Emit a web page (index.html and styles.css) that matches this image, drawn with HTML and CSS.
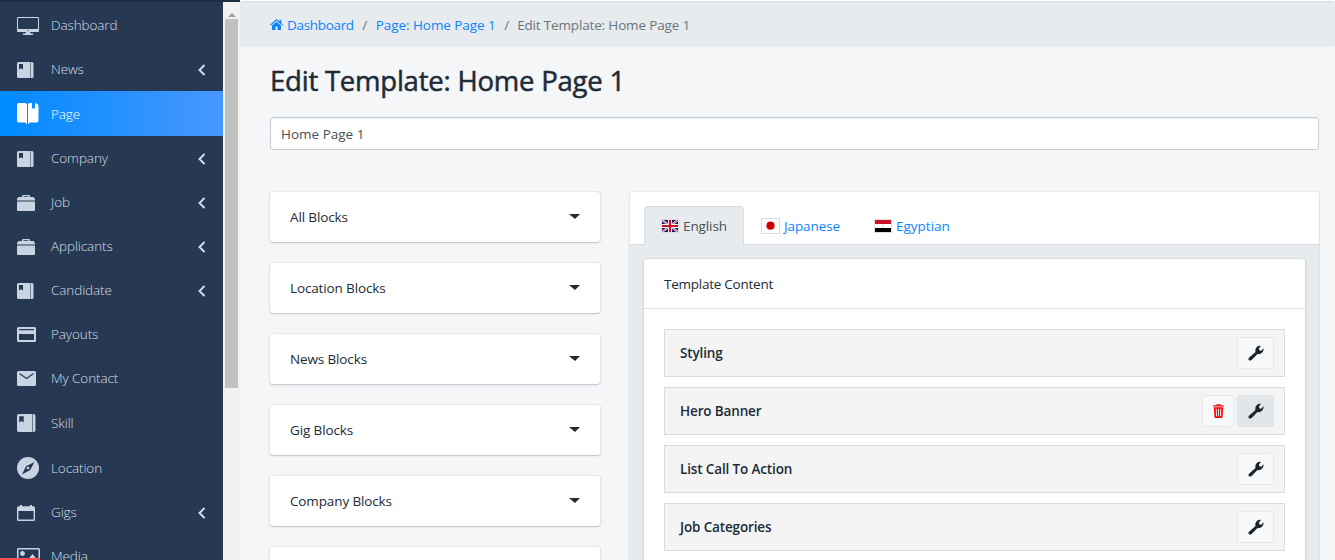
FILE: index.html
```html
<!DOCTYPE html>
<html lang="en">
<head>
<meta charset="utf-8">
<title>Edit Template: Home Page 1</title>
<link rel="stylesheet" href="styles.css">
</head>
<body>
<svg class="sprite" aria-hidden="true">
  <symbol id="i-desktop" viewBox="0 0 22 18"><path fill-rule="evenodd" d="M1 0h20q1 0 1 1v13q0 1-1 1H1q-1 0-1-1V1q0-1 1-1zM1 1v11h20V1zM10.500 13v1h1v-1zM9 15h4l.5 1.500H16V18H6v-1.500h2.500z"/></symbol>
  <symbol id="i-album" viewBox="0 0 17 16"><path fill-rule="evenodd" d="M1.500 0H13.500v16H1.500Q0 16 0 14.500v-13Q0 0 1.500 0zM2 2V7.500l2-1.200L6 7.500V2z"/><path d="M14 0h1q1.500 0 1.500 1.500v13Q16.500 16 15 16h-1z"/></symbol>
  <symbol id="i-book" viewBox="0 0 22 22"><path d="M2 0h6q2 .2 2 1.500v20L8.500 19.500H2q-2 0-2-2V2Q0 0 2 0zM13 0H15v6l1.500-1.200L18 6V.2L19.500.5Q21.500 1 21.500 3v14.500q0 2-2 2h-7l-1.500 2V1.500Q11 .2 13 0z"/></symbol>
  <symbol id="i-case" viewBox="0 0 18 16"><path fill-rule="evenodd" d="M5 2V1q0-1 1-1h6q1 0 1 1v1h3.500L18 4v1.500H0V4l1.500-2zm1.500 0h5V1.200h-5zM0 6.500h18V15q0 1-1 1H1q-1 0-1-1z"/></symbol>
  <symbol id="i-card" viewBox="0 0 19 15"><path fill-rule="evenodd" d="M1.500 0h16Q19 0 19 1.500v12q0 1.500-1.500 1.500h-16Q0 15 0 13.500v-12Q0 0 1.500 0zM2 2v1.200h15V2zm0 5v6h15V7z"/></symbol>
  <symbol id="i-mail" viewBox="0 0 19 15"><rect width="19" height="15" rx="1.500"/><path class="cut" d="M2.500 2.500l7 5 7-5"/></symbol>
  <symbol id="i-compass" viewBox="0 0 22 22"><path fill-rule="evenodd" d="M11 0a11 11 0 100 22 11 11 0 000-22zm6.500 5l-4.300 8L5 17.500l4-8.300z"/><circle cx="11" cy="11" r="1.300"/></symbol>
  <symbol id="i-calendar" viewBox="0 0 18 16"><path fill-rule="evenodd" d="M3 0h2v1.200h8V0h2v1.200h1.500Q18 1.200 18 2.700v11.800q0 1.500-1.500 1.500h-15Q0 16 0 14.500V2.700q0-1.500 1.500-1.500H3zM1.400 6v8.600h15.200V6z"/></symbol>
  <symbol id="i-image" viewBox="0 0 23 18"><path fill-rule="evenodd" d="M1.500 0h20Q23 0 23 1.500v15q0 1.500-1.500 1.500h-20Q0 18 0 16.500v-15Q0 0 1.500 0zm0 1.500v15h20v-15z"/><circle cx="5.500" cy="5.500" r="2.400"/><path d="M3 15l4-5 3 3 5.500-7 5 6v3z"/></symbol>
  <symbol id="i-chev" viewBox="0 0 8 12"><path class="line" d="M6.500 1L1.500 6l5 5"/></symbol>
  <symbol id="i-home" viewBox="0 0 13 11"><path d="M6.500 0L9.500 2.600V.8h1.700v3.300L13 5.700l-.8.800-5.700-4.900L.8 6.500 0 5.700z"/><path d="M2 6.600l4.500-3.900L11 6.600V11H7.600V7.500H5.400V11H2z"/></symbol>
  <symbol id="i-wrench" viewBox="0 0 16 16"><path d="M1 12.700L7.500 7Q6.800 4.200 8.600 2.300T13 1l-2 2.300.3 2 2 .4L15.500 3.300Q16 6 14 7.800T9.500 9L3.300 15.200Q2 16 .9 15T1 12.700z"/></symbol>
  <symbol id="i-trash" viewBox="0 0 11 14"><path fill-rule="evenodd" d="M3.300 1.200Q3.400 0 4.500 0h2q1.100 0 1.200 1.200H10q1 0 1 1.300H0q0-1.300 1-1.300zm1 0h2.400Q6.600.8 6.200.8H4.800Q4.400.8 4.300 1.200zM.8 3.200h9.400L9.500 13q-.1 1-1 1h-6q-.9 0-1-1zM2.700 4.800l.4 7.500h.9l-.3-7.500zm2.400 0v7.500h.8V4.800zm2.200 0L7 12.300h.9l.4-7.500z"/></symbol>
</svg>

<div class="app">
  <nav class="sidebar">
    <a class="item"><span class="ico"><svg width="22" height="18"><use href="#i-desktop"/></svg></span><span class="label">Dashboard</span></a>
    <a class="item"><span class="ico"><svg width="17" height="16"><use href="#i-album"/></svg></span><span class="label">News</span><svg class="chev"><use href="#i-chev"/></svg></a>
    <a class="item tall active"><span class="ico"><svg width="22" height="22"><use href="#i-book"/></svg></span><span class="label">Page</span></a>
    <a class="item"><span class="ico"><svg width="17" height="16"><use href="#i-album"/></svg></span><span class="label">Company</span><svg class="chev"><use href="#i-chev"/></svg></a>
    <a class="item"><span class="ico"><svg width="18" height="16"><use href="#i-case"/></svg></span><span class="label">Job</span><svg class="chev"><use href="#i-chev"/></svg></a>
    <a class="item"><span class="ico"><svg width="18" height="16"><use href="#i-case"/></svg></span><span class="label">Applicants</span><svg class="chev"><use href="#i-chev"/></svg></a>
    <a class="item"><span class="ico"><svg width="17" height="16"><use href="#i-album"/></svg></span><span class="label">Candidate</span><svg class="chev"><use href="#i-chev"/></svg></a>
    <a class="item"><span class="ico"><svg width="19" height="15"><use href="#i-card"/></svg></span><span class="label">Payouts</span></a>
    <a class="item"><span class="ico"><svg width="19" height="15"><use href="#i-mail"/></svg></span><span class="label">My Contact</span></a>
    <a class="item tall"><span class="ico"><svg width="19" height="18"><use href="#i-album"/></svg></span><span class="label">Skill</span></a>
    <a class="item tall"><span class="ico"><svg width="22" height="22"><use href="#i-compass"/></svg></span><span class="label">Location</span></a>
    <a class="item"><span class="ico"><svg width="18" height="16"><use href="#i-calendar"/></svg></span><span class="label">Gigs</span><svg class="chev"><use href="#i-chev"/></svg></a>
    <a class="item"><span class="ico"><svg width="23" height="18"><use href="#i-image"/></svg></span><span class="label">Media</span></a>
    <div class="progress"></div>
  </nav>
  <div class="scrollbar"><div class="arrow"></div><div class="thumb"></div></div>

  <main class="main">
    <ol class="breadcrumb">
      <li><a><svg class="home"><use href="#i-home"/></svg><span class="b1">Dashboard</span></a></li>
      <li class="sep">/</li>
      <li><a class="b2">Page: Home Page 1</a></li>
      <li class="sep">/</li>
      <li class="b3">Edit Template: Home Page 1</li>
    </ol>
    <div class="content">
      <h1><span>Edit Template: Home Page 1</span></h1>
      <input class="field" type="text" value="Home Page 1">
      <div class="columns">
        <div class="blocks">
          <div class="block"><span>All Blocks</span><i class="caret"></i></div>
          <div class="block"><span>Location Blocks</span><i class="caret"></i></div>
          <div class="block"><span>News Blocks</span><i class="caret"></i></div>
          <div class="block"><span>Gig Blocks</span><i class="caret"></i></div>
          <div class="block"><span>Company Blocks</span><i class="caret"></i></div>
          <div class="block"></div>
        </div>
        <section class="panel">
          <div class="tabs">
            <a class="tab on"><svg class="flag" viewBox="0 0 16 12"><path fill="#012169" d="M0 0h16v12H0z"/><path stroke="#fff" stroke-width="2" d="M0 0l16 12M16 0L0 12"/><path stroke="#c8102e" stroke-width=".8" d="M0 0l16 12M16 0L0 12"/><path stroke="#fff" stroke-width="4" d="M8 0v12M0 6h16"/><path stroke="#c8102e" stroke-width="2.200" d="M8 0v12M0 6h16"/></svg><span>English</span></a>
            <a class="tab ja"><svg class="flag wide" viewBox="0 0 17 14"><path fill="#fff" d="M0 0h17v14H0z"/><circle cx="8.500" cy="6.700" r="4.100" fill="#d30000"/></svg><span>Japanese</span></a>
            <a class="tab eg"><svg class="flag" viewBox="0 0 16 12"><path fill="#fff" d="M0 0h16v12H0z"/><path fill="#ce1126" d="M0 0h16v4H0z"/><path d="M0 8h16v4H0z"/><path fill="#f3e3b4" d="M7 5h2v2.500H7z"/></svg><span>Egyptian</span></a>
          </div>
          <div class="card">
            <header class="card-head"><span>Template Content</span></header>
            <div class="rows">
              <div class="row"><strong>Styling</strong><button class="btn"><svg class="wrench"><use href="#i-wrench"/></svg></button></div>
              <div class="row"><strong>Hero Banner</strong><button class="btn del"><svg class="trash"><use href="#i-trash"/></svg></button><button class="btn hover"><svg class="wrench"><use href="#i-wrench"/></svg></button></div>
              <div class="row"><strong>List Call To Action</strong><button class="btn"><svg class="wrench"><use href="#i-wrench"/></svg></button></div>
              <div class="row"><strong>Job Categories</strong><button class="btn"><svg class="wrench"><use href="#i-wrench"/></svg></button></div>
            </div>
          </div>
        </section>
      </div>
    </div>
  </main>
</div>
</body>
</html>
```
FILE: styles.css
```css
* { box-sizing: border-box; }
body {
  margin: 0;
  height: 560px;
  overflow: hidden;
  background: #f4f6f8;
  color: #212b36;
  font: 13.5px/20px "Segoe UI", "Open Sans", "Noto Sans", sans-serif;
}
.sprite { position: absolute; width: 0; height: 0; }
.app { display: flex; height: 560px; overflow: hidden; }

.sidebar {
  position: relative;
  width: 223px;
  flex: none;
  height: 560px;
  overflow: hidden;
  padding-top: 1px;
  border-top: 2px solid #1e2e43;
  background: #273952;
  color: #d3dde8;
  fill: #c8d4e2;
  font-weight: 300;
}
.item { display: flex; align-items: center; height: 44px; padding: 0 17px 0 16px; }
.item.tall { height: 45px; }
.item.active { background: linear-gradient(90deg, #008aff, #4897ff); color: #fff; fill: #fff; }
.ico { display: flex; width: 35px; padding: 1px 0 0 .5px; }
.label { flex: 1; letter-spacing: -.1px; }
.chev { width: 8px; height: 12px; margin-top: 1px; }
.line { fill: none; stroke: #d5dfe9; stroke-width: 1.900; }
.cut { fill: none; stroke: #273952; stroke-width: 1.200; }
.progress { position: absolute; left: 0; bottom: 0; width: 40px; height: 2px; background: #f94b50; }

.scrollbar { width: 17px; flex: none; background: #f1f1f1; border-top: 2px solid #1e2e43; }
.arrow { height: 17px; display: flex; justify-content: center; padding-top: 7px; }
.arrow::before { content: ""; height: 4px; border: 4px solid transparent; border-top: 0; border-bottom: 4px solid #a0a0a0; }
.thumb { width: 13px; height: 369px; margin: 0 2px; background: #c1c1c1; }

.main { flex: 1; border-top: 1px solid #fff; }
.breadcrumb {
  display: flex;
  align-items: center;
  height: 46px;
  margin: 0;
  padding: 0 30px;
  list-style: none;
  border-top: 1px solid #dbdddd;
  border-radius: 4px;
  background: #e7ebee;
  color: #6c757d;
}
.breadcrumb a { display: flex; align-items: center; color: #0a84ff; }
.home { width: 13px; height: 11px; margin-right: 4px; fill: #0a84ff; }
.sep { width: 22px; text-align: center; }
.b1 { letter-spacing: -.32px; }
.b2 { letter-spacing: -.07px; }
.b3 { margin-left: -.5px; letter-spacing: -.16px; }

.content { padding: 0 16px 0 30px; }
h1 {
  margin: 0;
  padding-top: 17px;
  height: 70px;
  font-size: 27.5px;
  line-height: 34px;
  font-weight: 500;
  letter-spacing: -.22px;
  white-space: nowrap;
  -webkit-text-stroke: .5px #212b36;
}
.field {
  display: block;
  width: 1049px;
  height: 33px;
  padding: 0 10px;
  border: 1px solid #c4cdd5;
  border-radius: 3px;
  background: #fff;
  color: #495057;
  font: inherit;
  box-shadow: inset 0 1px 1px #eef0f2;
}
.columns { display: flex; gap: 30px; margin: 42px -1px 0 0; }
.blocks { display: grid; align-content: start; gap: 21px; width: 330px; letter-spacing: -.13px; }
.block {
  display: flex;
  justify-content: space-between;
  height: 50px;
  padding: 0 20px;
  align-items: center;
  border-radius: 3px;
  background: #fff;
  box-shadow: 0 0 0 1px rgba(63,63,68,.05), 0 1px 3px rgba(63,63,68,.15), 0 1px 0 #dfe3e8;
}
.caret { margin-top: -2px; border: 5.5px solid transparent; border-top-color: #212b36; border-bottom: 0; border-left-width: 6px; border-right-width: 5px; }

.panel {
  width: 689px;
  flex: none;
  height: 420px;
  border-radius: 3px;
  background: #e7ebee;
  box-shadow: 0 0 0 1px rgba(63,63,68,.05), 0 1px 3px rgba(63,63,68,.12);
}
.tabs {
  display: flex;
  align-items: flex-end;
  height: 53px;
  padding-left: 14px;
  border-bottom: 1px solid #dadee3;
  border-radius: 3px 3px 0 0;
  background: #fff;
}
.tab { display: flex; align-items: center; height: 38px; padding: 2px 17px 0; color: #0a84ff; }
.tab.on {
  width: 100px;
  height: 39px;
  margin-bottom: -1px;
  border: 1px solid #dadee3;
  border-bottom: 0;
  border-radius: 4px 4px 0 0;
  background: #e7ebee;
  color: #495057;
  padding: 0 16px;
  letter-spacing: -.1px;
}
.flag { width: 18px; height: 14px; border: 1px solid #ddd; margin-right: 4px; flex: none; }
.flag.wide { width: 19px; height: 16px; }
.tab.ja { width: 113px; letter-spacing: -.1px; }
.card {
  margin: 14px 14px 0;
  height: 340px;
  border-radius: 3px;
  background: #fff;
  box-shadow: 0 0 0 1px rgba(63,63,68,.05), 0 1px 3px rgba(63,63,68,.15);
}
.card-head { display: flex; align-items: center; height: 50px; padding: 0 20px; border-bottom: 1px solid #dde2e8; letter-spacing: -.25px; }
.rows { display: grid; gap: 10px; padding: 20px 20px 0; }
.row { display: flex; align-items: center; height: 48px; padding: 0 10px 0 15px; border: 1px solid #d9dbdd; background: #f4f4f4; }
.row strong { flex: 1; font-weight: 600; letter-spacing: -.14px; }
.btn {
  display: flex;
  align-items: center;
  justify-content: center;
  width: 37px;
  height: 32px;
  padding: 0;
  border: 1px solid #e6e8eb;
  border-radius: 3px;
  background: #f8f9fb;
}
.btn.hover { background: #e2e6ea; border-color: #dfe3e8; }
.btn.del { width: 32px; margin-right: 3px; fill: #f00; }
.wrench { width: 16px; height: 16px; fill: #1d232b; }
.trash { width: 11px; height: 14px; }
```
